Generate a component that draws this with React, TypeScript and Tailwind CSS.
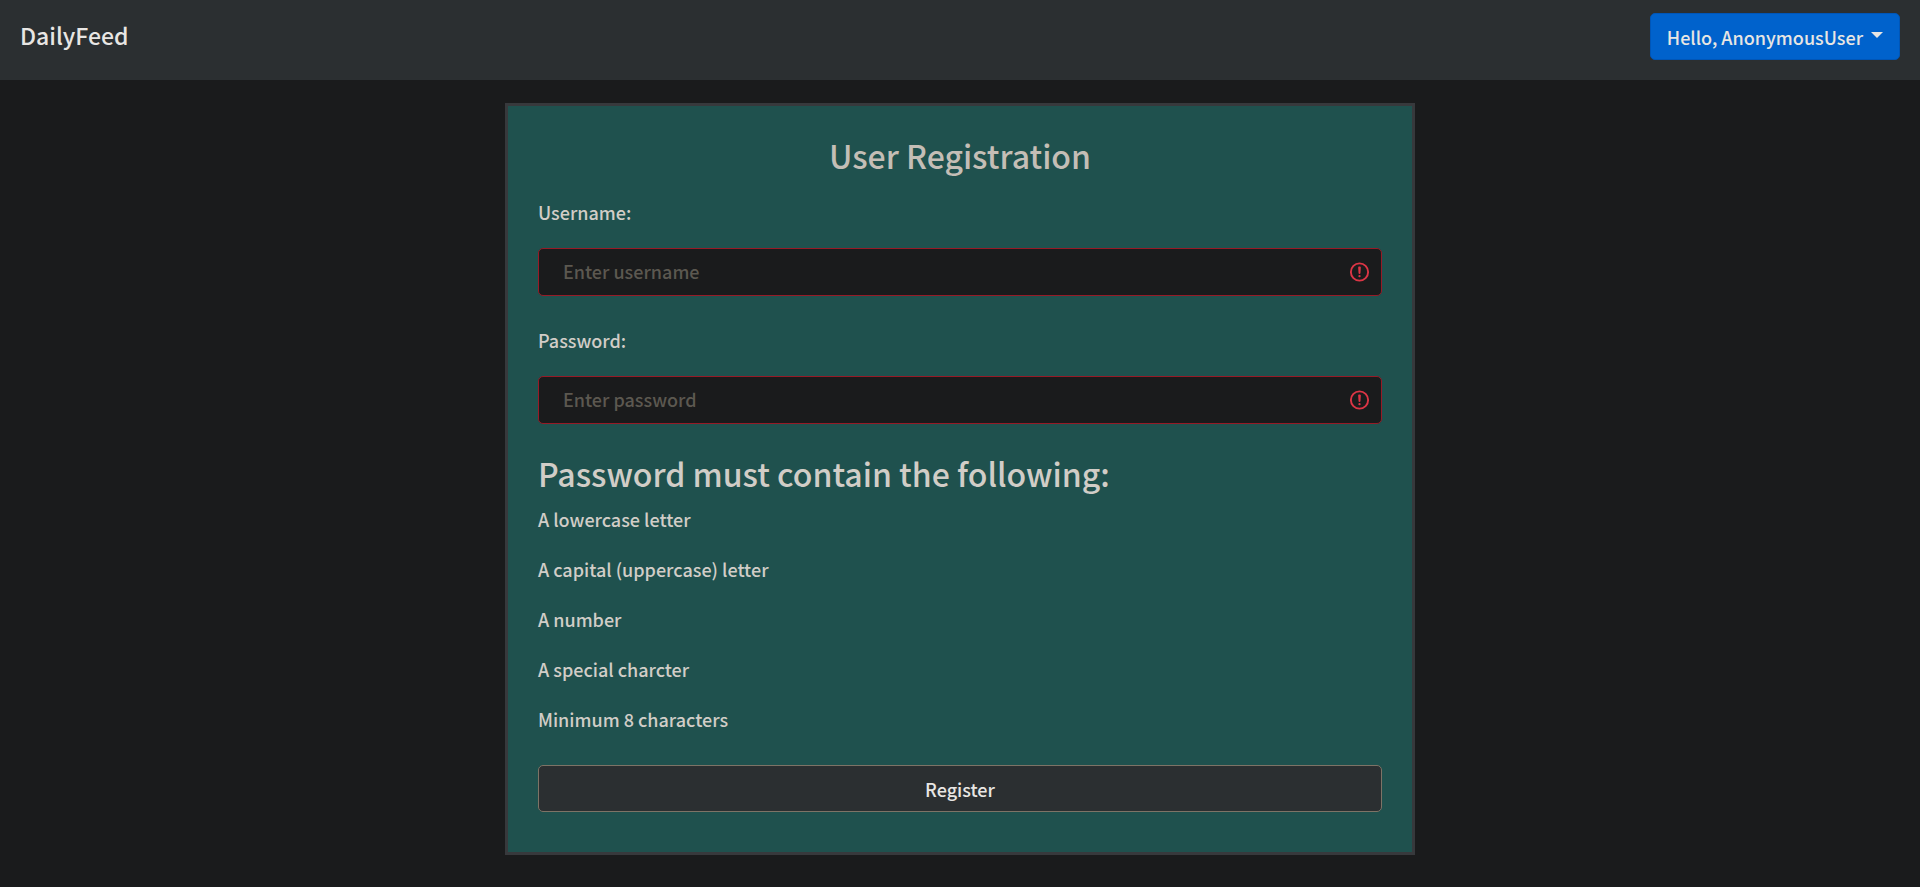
import { useState } from "react";

const rules = [
  "A lowercase letter",
  "A capital (uppercase) letter",
  "A number",
  "A special charcter",
  "Minimum 8 characters",
];

function InvalidIcon() {
  return (
    <svg
      viewBox="0 0 12 12"
      className="pointer-events-none absolute top-1/2 right-[11px] size-[23px] -translate-y-1/2"
      fill="none"
      stroke="#dc3545"
      aria-hidden="true"
    >
      <circle cx="6" cy="6" r="4.5" />
      <path strokeLinejoin="round" d="M5.8 3.6h.4L6 6.5z" />
      <circle cx="6" cy="8.2" r=".6" fill="#dc3545" stroke="none" />
    </svg>
  );
}

type FieldProps = {
  id: string;
  label: string;
  type: string;
  placeholder: string;
};

function Field({ id, label, type, placeholder }: FieldProps) {
  const [value, setValue] = useState("");
  const invalid = value === "";
  return (
    <div className="mb-[30px]">
      <label htmlFor={id} className="mb-[22px] block leading-7">
        {label}
      </label>
      <div className="relative">
        <input
          id={id}
          type={type}
          value={value}
          onChange={(e) => setValue(e.target.value)}
          placeholder={placeholder}
          aria-invalid={invalid}
          className={
            "block h-12 w-full rounded-[5px] border bg-[#1a1b1c] pr-12 pb-0.5 pl-6 outline-none placeholder:text-[#5c5850] " +
            (invalid ? "border-[#961b27]" : "border-[#7d7366]")
          }
        />
        {invalid && <InvalidIcon />}
      </div>
    </div>
  );
}

export default function App() {
  return (
    <div className="min-h-screen bg-[#1a1b1c] font-['Noto_Sans_CJK_SC',sans-serif] text-lg font-medium text-[#d1cdc7]">
      <nav className="flex h-20 items-start justify-between bg-[#2b2f31] px-5 pt-[13px] text-[#e8e6e3]">
        <a href="#" className="pt-1 text-[23px] leading-9">
          DailyFeed
        </a>
        <button
          type="button"
          className="flex h-[47px] items-center gap-2 rounded-[5px] border border-[#0056b8] bg-[#0062cc] px-4"
        >
          Hello, AnonymousUser
          <svg viewBox="0 0 12 6" className="mb-1 h-[6px] w-3" fill="currentColor" aria-hidden="true">
            <path d="M0 0h12L6 6z" />
          </svg>
        </button>
      </nav>
      <main className="px-4 pt-[23px] pb-8">
        <form
          className="mx-auto max-w-[910px] border-[3px] border-[#37393c] bg-[#1f514e] px-[30px] pt-[30px] pb-10"
          onSubmit={(e) => e.preventDefault()}
        >
          <h1 className="mb-6 text-center text-[32px] leading-[38px] text-[#c4beb6]">User Registration</h1>
          <Field id="username" label="Username:" type="text" placeholder="Enter username" />
          <Field id="password" label="Password:" type="password" placeholder="Enter password" />
          <h2 className="mb-3.5 text-[32px] leading-[38px]">Password must contain the following:</h2>
          <ul className="mb-[33px]">
            {rules.map((rule) => (
              <li key={rule} className="mb-6 leading-[26px]">
                {rule}
              </li>
            ))}
          </ul>
          <button
            type="submit"
            className="block h-[47px] w-full rounded-[5px] border border-[#7d7366] bg-[#2b2f31] text-[#e8e6e3]"
          >
            Register
          </button>
        </form>
      </main>
    </div>
  );
}
